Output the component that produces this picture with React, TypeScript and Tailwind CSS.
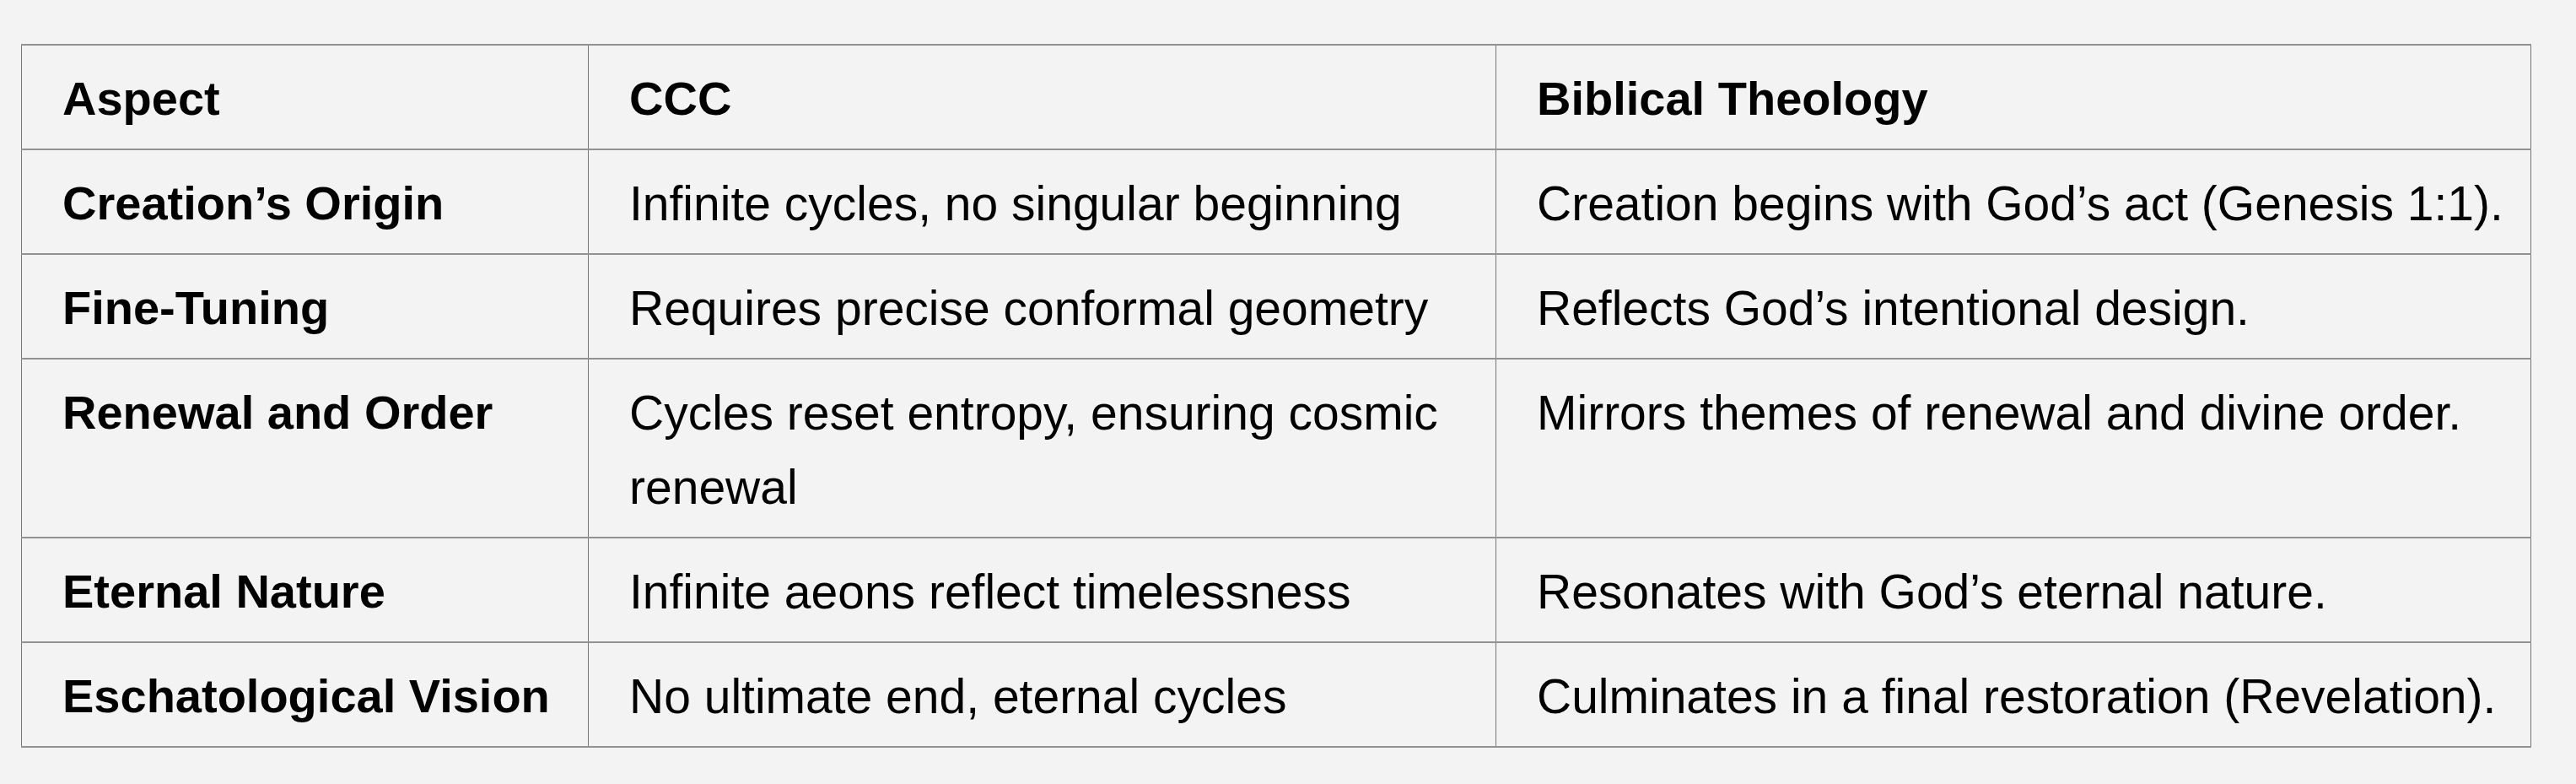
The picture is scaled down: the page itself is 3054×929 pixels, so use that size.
import React from 'react';

interface Row {
  aspect: string;
  ccc: string;
  biblical: string;
}

const rows: Row[] = [
  {
    aspect: 'Creation’s Origin',
    ccc: 'Infinite cycles, no singular beginning',
    biblical: 'Creation begins with God’s act (Genesis 1:1).',
  },
  {
    aspect: 'Fine-Tuning',
    ccc: 'Requires precise conformal geometry',
    biblical: 'Reflects God’s intentional design.',
  },
  {
    aspect: 'Renewal and Order',
    ccc: 'Cycles reset entropy, ensuring cosmic renewal',
    biblical: 'Mirrors themes of renewal and divine order.',
  },
  {
    aspect: 'Eternal Nature',
    ccc: 'Infinite aeons reflect timelessness',
    biblical: 'Resonates with God’s eternal nature.',
  },
  {
    aspect: 'Eschatological Vision',
    ccc: 'No ultimate end, eternal cycles',
    biblical: 'Culminates in a final restoration (Revelation).',
  },
];

const cell =
  'align-top border-y-2 border-x border-y-[#929292] border-x-[#767676] pl-12 pr-8 pt-[19px] pb-[15px] leading-[88px] text-left';

export default function App() {
  return (
    <div
      className="min-h-[929px] w-full bg-[#f3f3f3] pl-[25px] pt-[52px] text-black"
      style={{ fontFamily: '"Liberation Sans", Arial, sans-serif' }}
    >
      <table className="w-[2975px] table-fixed border-collapse">
        <colgroup>
          <col className="w-[672px]" />
          <col className="w-[1076px]" />
          <col className="w-[1227px]" />
        </colgroup>
        <thead>
          <tr className="text-[56px] font-bold">
            <th className={cell}>Aspect</th>
            <th className={cell}>CCC</th>
            <th className={cell}>Biblical Theology</th>
          </tr>
        </thead>
        <tbody>
          {rows.map((row) => (
            <tr key={row.aspect}>
              <td className={`${cell} text-[56px] font-bold`}>{row.aspect}</td>
              <td className={`${cell} text-[57px]`}>{row.ccc}</td>
              <td className={`${cell} text-[57px]`}>{row.biblical}</td>
            </tr>
          ))}
        </tbody>
      </table>
    </div>
  );
}
